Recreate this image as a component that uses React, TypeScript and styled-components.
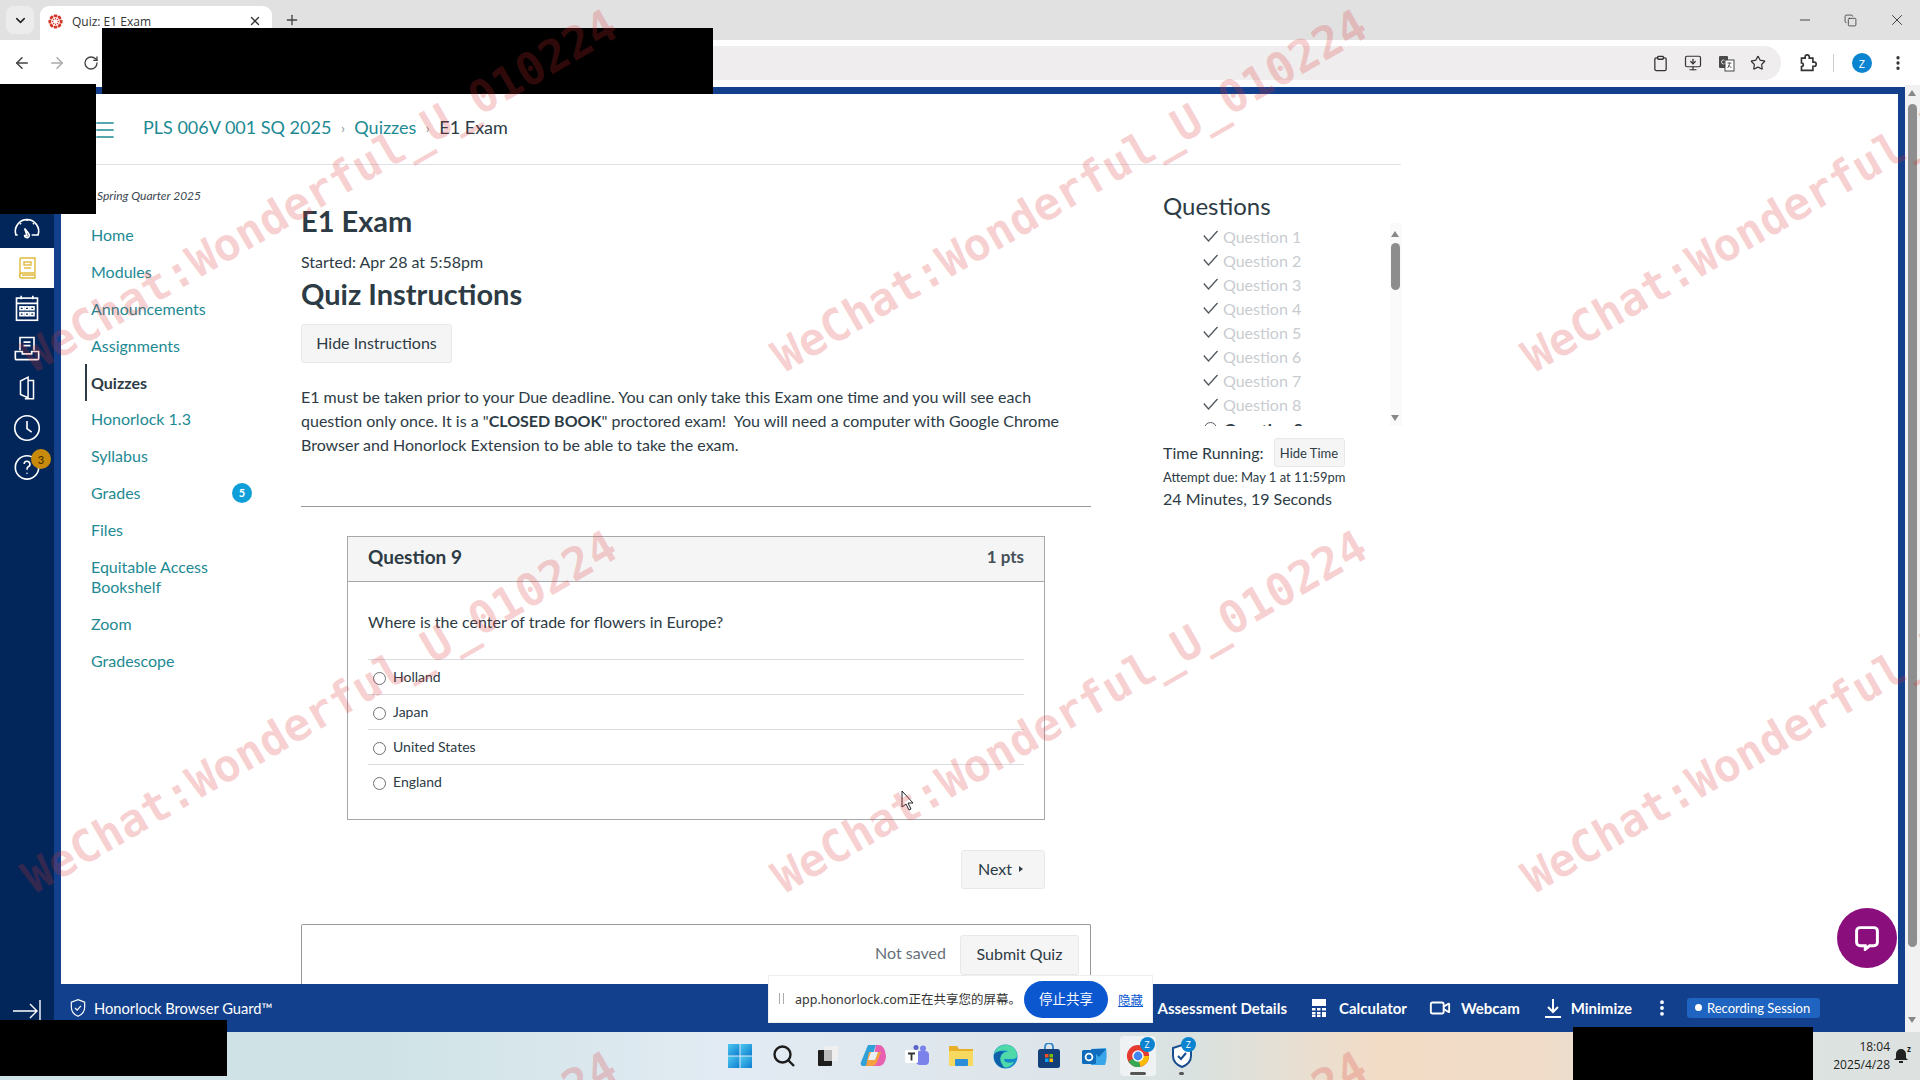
import React from "react";
import styled, { createGlobalStyle } from "styled-components";
import {
  ArrowLeft, ArrowRight, RotateCw, Clipboard, MonitorDown, Star, EllipsisVertical,
  Minus, X, Plus, ChevronDown, Copy, Video, Menu as MenuIcon,
} from "lucide-react";

const Global = createGlobalStyle`
  html, body { margin: 0; padding: 0; background: #fff; overflow: hidden; }
  * { box-sizing: border-box; }
`;

const Shell = styled.div`
  position: relative; width: 1920px; height: 1080px; overflow: hidden;
  display: flex; flex-direction: column;
  font-family: Lato, "Noto Sans", sans-serif; color: #2d3b45;
`;

/* ---- chrome ---- */
const TabStrip = styled.div`
  height: 40px; flex: none; background: #e1e1e1; display: flex; align-items: flex-end; padding-left: 6px;
`;
const TabMenu = styled.div`
  width: 28px; height: 28px; margin-bottom: 6px; border-radius: 8px; background: #ececec;
  display: flex; align-items: center; justify-content: center; color: #222;
`;
const Tab = styled.div`
  width: 232px; height: 34px; margin-left: 6px; background: #fff; border-radius: 9px 9px 0 0;
  display: flex; align-items: center; padding: 0 10px 4px 8px; gap: 9px;
  font: 12px "Open Sans", "Noto Sans", sans-serif; color: #333;
`;
const TabTitle = styled.span`flex: 1;`;
const NewTab = styled.div`margin: 0 0 6px 12px; height: 28px; display: flex; align-items: center; color: #444;`;
const WindowButtons = styled.div`
  margin-left: auto; display: flex; gap: 31px; height: 40px; align-items: center; padding-right: 14px; color: #222;
`;
const Toolbar = styled.div`
  height: 47px; flex: none; background: #fff; border-radius: 10px 10px 0 0; display: flex; align-items: center;
  padding: 0 0 1px 13px; color: #444;
`;
const NavButtons = styled.div`display: flex; gap: 17px; align-items: center;`;
const Omnibox = styled.div`
  width: 1675px; height: 34px; background: #efeded; border-radius: 0 17px 17px 0; flex: none;
  display: flex; align-items: center; justify-content: flex-end; gap: 15.5px; padding-right: 15px; color: #333;
  margin-left: 7px;
`;
const ToolbarEnd = styled.div`display: flex; align-items: center; margin-left: 18px; color: #333;`;
const ToolbarDivider = styled.div`width: 1px; height: 18px; background: #ccc; margin: 0 18px 0 16px;`;
const Avatar = styled.div`
  width: 20px; height: 20px; border-radius: 50%; background: #0a84d0; color: #fff; font: 11px "Open Sans", sans-serif;
  display: flex; align-items: center; justify-content: center; margin-right: 17px;
`;

/* ---- browser viewport ---- */
const Viewport = styled.div`flex: 1; display: flex; min-height: 0;`;
const GlobalNav = styled.nav`
  width: 54px; flex: none; background: #03265a; display: flex; flex-direction: column; align-items: center;
  padding-top: 121px; position: relative;
`;
const NavIcon = styled.div<{ $active?: boolean }>`
  width: 54px; height: 40px; display: flex; align-items: center; justify-content: center; position: relative; flex: none;
  background: ${p => (p.$active ? "#fff" : "transparent")};
  color: ${p => (p.$active ? "#e0b93c" : "#fff")};
`;
const HelpBadge = styled.span`
  position: absolute; left: 31px; top: 1px; width: 20px; height: 20px; border-radius: 50%; background: #c78a0b;
  font-size: 11px; color: #3a2a00; display: flex; align-items: center; justify-content: center;
`;
const Collapse = styled.div`margin-top: auto; height: 48px; padding-top: 13px; color: #fff; display: flex; align-items: flex-start;`;
const Stage = styled.div`
  flex: 1; min-width: 0; background: #13408c; display: flex; flex-direction: column; padding: 7px 7px 0 7px;
`;
const Page = styled.div`flex: 1; min-height: 0; background: #fff; overflow: hidden; position: relative;`;
const Header = styled.header`
  width: 1340px; height: 71px; border-bottom: 1px solid #dfe2e4; display: flex; align-items: center; padding: 0 0 4px 32px;
`;
const Burger = styled.div`color: #1e8a94; display: flex; margin: 6px 26px 0 0;`;
const Crumbs = styled.div`display: flex; align-items: center; font-size: 18px; color: #2d3b45;`;
const Crumb = styled.span`color: #1e8a94;`;
const CrumbSep = styled.span`margin: 0 9.5px; font-size: 14px; color: #8b969e;`;
const Columns = styled.div`display: flex;`;
const Menu = styled.aside`width: 240px; flex: none; padding: 23px 0 0 24px;`;
const Term = styled.div`font-size: 12px; font-style: italic; line-height: 16px; padding-left: 12px; margin-bottom: 13px; color: #3a4650;`;
const MenuItem = styled.div<{ $active?: boolean; $tall?: boolean }>`
  position: relative; padding: 8.4px 0 8.4px 4px; width: 150px; font-size: 16px; line-height: 20px;
  margin-top: ${p => (p.$tall ? 1 : 0)}px;
  color: ${p => (p.$active ? "#2d3b45" : "#1e8a94")};
  font-weight: ${p => (p.$active ? 700 : 400)};
  border-left: 2px solid ${p => (p.$active ? "#2d3b45" : "transparent")};
`;
const CountBadge = styled.span`
  position: absolute; left: 145px; top: 9px; width: 20px; height: 20px; border-radius: 50%; background: #0e9fd8; color: #fff;
  font-size: 11px; font-weight: 700; display: flex; align-items: center; justify-content: center;
`;
const Content = styled.main`width: 790px; flex: none;`;
const Title = styled.h1`margin: 39px 0 0; font-size: 29px; line-height: 34px; font-weight: 700;`;
const Started = styled.div`margin-top: 12px; font-size: 16px; line-height: 24px;`;
const Subtitle = styled.h2`margin: 3px 0 0; font-size: 29px; line-height: 34px; font-weight: 700;`;
const Btn = styled.div`
  display: inline-flex; align-items: center; justify-content: center; gap: 8px; background: #f5f5f5; border: 1px solid #e6e8ea;
  border-radius: 3px; font-size: 16px; color: #2d3b45; padding-bottom: 2px;
`;
const HideBtn = styled(Btn)`width: 151px; height: 39px; margin-top: 13px;`;
const Para = styled.p`margin: 22px 0 0; font-size: 16px; line-height: 24px; width: 780px;`;
const Rule = styled.hr`margin: 49px 0 0; border: 0; height: 1px; background: #999;`;
const Card = styled.section`margin: 29px 0 0 46px; width: 698px; height: 284px; border: 1px solid #a5a9ac;`;
const CardHead = styled.div`
  height: 45px; background: #f5f5f5; border-bottom: 1px solid #a5a9ac; display: flex; align-items: center; justify-content: space-between;
  padding: 0 20px 5px; font-size: 19px; font-weight: 700;
`;
const Pts = styled.span`font-size: 17px; font-weight: 700; color: #444f58;`;
const CardBody = styled.div`padding: 28px 20px 0;`;
const Prompt = styled.div`font-size: 16px; line-height: 24px; height: 49px;`;
const Answer = styled.label`
  display: flex; align-items: center; height: 35px; border-top: 1px solid #d8dcdf; font-size: 14px; padding: 0 0 2px 5px; gap: 7px; color: #2d3b45;
`;
const Radio = styled.span`width: 13px; height: 13px; border-radius: 50%; border: 1px solid #6a6f73; flex: none; margin-top: 4px; background: #fff;`;
const NextRow = styled.div`display: flex; justify-content: flex-end; margin: 30px 46px 0 0;`;
const NextBtn = styled(Btn)`width: 84px; height: 39px; gap: 7px; padding-right: 5px;`;
const Caret = styled.span`
  width: 0; height: 0; border-left: 4px solid #2d3b45; border-top: 3.5px solid transparent; border-bottom: 3.5px solid transparent; margin-top: 1px;
`;
const SubmitBox = styled.div`
  margin-top: 35px; height: 70px; border: 1px solid #999; border-bottom: 0; display: flex; justify-content: flex-end; align-items: flex-start;
  padding: 10px 11px 0 0; gap: 14px; border-radius: 2px 2px 0 0;
`;
const NotSaved = styled.span`font-size: 16px; line-height: 36px; color: #66717a;`;
const SubmitBtn = styled(Btn)`width: 119px; height: 40px; padding-bottom: 3px;`;
const Side = styled.aside`margin-left: 72px; width: 240px; flex: none;`;
const SideTitle = styled.h3`margin: 26px 0 0; font-size: 24px; line-height: 30px; font-weight: 400;`;
const QList = styled.div`position: relative; height: 203px; margin-top: 2px; overflow: hidden; padding: 1px 0 0 40px;`;
const QItem = styled.div<{ $current?: boolean }>`
  height: 24px; display: flex; align-items: center; gap: 5px; font-size: 16px;
  color: ${p => (p.$current ? "#2d3b45" : "#c8ccd0")}; font-weight: ${p => (p.$current ? 700 : 400)};
`;
const QMark = styled.svg`width: 15px; height: 12px; flex: none; color: #4f565c;`;
const QCircle = styled.span`width: 13px; height: 13px; border: 1px solid #5a6168; border-radius: 50%; margin: 0 2px 0 1px;`;
const ListBar = styled.div`
  position: absolute; left: 227px; top: 0; bottom: 0; width: 12px; background: #fafafa;
`;
const ListThumb = styled.div`position: absolute; left: 1px; top: 20px; width: 9px; height: 47px; border-radius: 5px; background: #8d8d8d;`;
const UpArrow = styled.span`
  position: absolute; left: 1px; top: 8px; width: 0; height: 0; border: 4.5px solid transparent; border-top: 0; border-bottom: 6px solid #888;
`;
const DownArrow = styled.span`
  position: absolute; left: 1px; bottom: 5px; width: 0; height: 0; border: 4.5px solid transparent; border-bottom: 0; border-top: 6px solid #888;
`;
const TimeRow = styled.div`display: flex; align-items: center; font-size: 16px; gap: 10px; margin-top: 12px;`;
const TimeBtn = styled(Btn)`width: 71px; height: 29px; font-size: 13px; padding-bottom: 0;`;
const Due = styled.div`font-size: 13px; line-height: 18px; margin-top: 1px;`;
const Remaining = styled.div`font-size: 16px; line-height: 24px; margin-top: 1px;`;

const BottomBar = styled.div`
  height: 48px; flex: none; background: #13408c; color: #fff; display: flex; align-items: center; font-size: 14.7px; padding-bottom: 1px;
`;
const Guard = styled.div`display: flex; align-items: center; gap: 6px; margin-left: 7px;`;
const Tools = styled.div`display: flex; align-items: center; margin-left: auto; padding-right: 78px; font-weight: 700; font-size: 15px;`;
const Tool = styled.div<{ $gap?: number; $inner?: number }>`display: flex; align-items: center; gap: ${p => p.$inner ?? 10}px; margin-left: ${p => p.$gap ?? 0}px;`;
const Pill = styled.div`
  margin-left: 15px; width: 133px; height: 20px; border-radius: 3px; background: #1f64c0; font-size: 13px; font-weight: 400; display: flex; align-items: center; gap: 5px; padding-left: 8px;
`;
const Dot = styled.span`width: 7px; height: 7px; border-radius: 50%; background: #fff;`;

const PageScroll = styled.div`width: 15px; flex: none; background: #f1f1f1; position: relative; margin-top: -2px;`;
const ScrollThumb = styled.div`position: absolute; left: 3px; top: 19px; width: 9px; height: 843px; background: #8e8e8e; border-radius: 5px;`;
const ScrollUp = styled.span`
  position: absolute; left: 3px; top: 5px; width: 0; height: 0; border: 4.5px solid transparent; border-top: 0; border-bottom: 6px solid #888;
`;
const ScrollDown = styled.span`
  position: absolute; left: 3px; top: 932px; width: 0; height: 0; border: 4.5px solid transparent; border-bottom: 0; border-top: 6px solid #888;
`;

/* ---- taskbar ---- */
const Taskbar = styled.div`
  height: 48px; flex: none; display: flex; align-items: center; position: relative; padding-left: 725px;
  background: linear-gradient(90deg, #cfe4e6 0%, #cfe3e6 20%, #e2ebf3 38%, #dde5ea 55%, #d9e2e0 62%, #f3dcc6 72%, #f0dcc8 80%, #dce3e1 90%, #dde2e0 100%);
  font: 12px "Open Sans", "Noto Sans", sans-serif; color: #222;
`;
const TaskIcon = styled.div<{ $on?: boolean }>`
  width: ${p => (p.$on ? 36 : 30)}px; height: 40px; margin: 0 ${p => (p.$on ? 11.2 : 14.2)}px 0 ${p => (p.$on ? -3 : 0)}px;
  display: flex; align-items: center; justify-content: center; flex: none; position: relative;
  border-radius: 4px; background: ${p => (p.$on ? "rgba(255,255,255,.55)" : "transparent")};
`;
const TaskBadge = styled.span`
  position: absolute; right: 1px; top: 1px; width: 15px; height: 15px; border-radius: 50%; background: #0a84d0; color: #fff; font-size: 9px;
  display: flex; align-items: center; justify-content: center;
`;
const RunBar = styled.span<{ $w: number }>`
  position: absolute; bottom: 1px; left: 50%; width: ${p => p.$w}px; height: 3px; margin-left: ${p => -p.$w / 2}px; border-radius: 2px; background: #555;
`;
const Clock = styled.div`
  position: absolute; right: 30px; top: 6px; text-align: right; line-height: 18px; font-size: 12px;
`;
const Bell = styled.div`position: absolute; right: 12px; top: 14px; display: flex;`;
const BellZ = styled.span`position: absolute; right: -3px; top: -3px; font-size: 8px; font-weight: 700;`;

/* ---- overlays ---- */
const Redact = styled.div<{ $x: number; $y: number; $w: number; $h: number }>`
  position: absolute; background: #000; left: ${p => p.$x}px; top: ${p => p.$y}px; width: ${p => p.$w}px; height: ${p => p.$h}px;
`;
const Mark = styled.div<{ $x: number; $y: number }>`
  position: absolute; left: ${p => p.$x}px; top: ${p => p.$y - 54}px; height: 54px; white-space: nowrap;
  font: 700 45px/54px "DejaVu Sans Mono", monospace; color: rgba(222, 48, 48, 0.22);
  transform-origin: 0 100%; transform: rotate(-30deg); pointer-events: none;
`;
const Chat = styled.div`
  position: absolute; left: 1837px; top: 908px; width: 60px; height: 60px; border-radius: 50%; background: #8a0f7d;
  display: flex; align-items: center; justify-content: center;
`;
const Cursor = styled.svg`position: absolute; left: 901px; top: 790px;`;
const Share = styled.div`
  position: absolute; left: 768px; top: 975px; width: 385px; height: 48px; background: #fff; border: 1px solid #eee; display: flex; align-items: center;
  font: 12.5px "Noto Sans", "Noto Sans CJK SC", sans-serif; color: #333; padding-bottom: 2px;
`;
const Grip = styled.span`width: 5px; height: 11px; margin: 0 11px 0 10px; border-left: 1px solid #aaa; border-right: 1px solid #aaa;`;
const StopBtn = styled.div`
  position: absolute; left: 255px; top: 5px; width: 84px; height: 37px; border-radius: 19px; background: #0b57d0; color: #fff;
  font-size: 13.5px; display: flex; align-items: center; justify-content: center; padding-bottom: 3px;
`;
const HideLink = styled.span`position: absolute; left: 349px; top: 14px; color: #0b57d0; text-decoration: underline; font-size: 12.5px;`;

const items = ["Home", "Modules", "Announcements", "Assignments", "Quizzes", "Honorlock 1.3", "Syllabus", "Grades", "Files", "Equitable Access Bookshelf", "Zoom", "Gradescope"];
const marks: [number, number][] = [[40, 384], [790, 384], [1540, 384], [40, 905], [790, 905], [1540, 905], [40, 1426], [790, 1426], [1540, 1426]];

const S = (p: { s?: number; children: React.ReactNode; vb?: string }) => (
  <svg width={p.s ?? 24} height={p.s ?? 24} viewBox={p.vb ?? "0 0 24 24"} fill="none" stroke="currentColor" strokeWidth="1.4">{p.children}</svg>
);

const Favicon = () => (
  <svg width="15" height="15" viewBox="0 0 16 16">
    <g fill="#d5372a">
      {[0, 45, 90, 135, 180, 225, 270, 315].map(a => (
        <g key={a} transform={`rotate(${a} 8 8)`}><rect x="6" y="0.5" width="4" height="3" rx="1" /><circle cx="8" cy="5" r=".8" /></g>
      ))}
    </g>
  </svg>
);

export default function App() {
  return (
    <Shell>
      <Global />
      <TabStrip>
        <TabMenu><ChevronDown size={15} strokeWidth={2.4} /></TabMenu>
        <Tab><Favicon /><TabTitle>Quiz: E1 Exam</TabTitle><X size={14} strokeWidth={2.4} /></Tab>
        <NewTab><Plus size={16} strokeWidth={2} /></NewTab>
        <WindowButtons>
          <Minus size={16} strokeWidth={1.2} />
          <Copy size={13} strokeWidth={1.3} />
          <X size={18} strokeWidth={1.1} />
        </WindowButtons>
      </TabStrip>
      <Toolbar>
        <NavButtons>
          <ArrowLeft size={18} strokeWidth={2} />
          <ArrowRight size={18} strokeWidth={2} color="#aaa" />
          <RotateCw size={16} strokeWidth={2} />
        </NavButtons>
        <Omnibox>
          <Clipboard size={17} strokeWidth={1.8} />
          <MonitorDown size={18} strokeWidth={1.6} />
          <svg width="17" height="17" viewBox="0 0 17 17"><rect x="1" y="1" width="9" height="12" rx="1" fill="#4a4a4a" /><circle cx="5.500" cy="7" r="2" fill="none" stroke="#ddd" strokeWidth="1" /><rect x="7" y="5" width="9" height="11" fill="#fff" stroke="#444" strokeWidth="1" /><path d="M9.500 8h4M11.500 8c0 2-1 4-2 5M10.500 10l3 3" stroke="#444" strokeWidth=".9" fill="none" /></svg>
          <Star size={16} strokeWidth={1.8} />
        </Omnibox>
        <ToolbarEnd>
          <svg width="18" height="20" viewBox="0 0 22 24" fill="none" stroke="#333" strokeWidth="2"><path d="M3 6h4.500V4.500a2.500 2.500 0 0 1 5 0V6H17v5h1.500a2.500 2.500 0 0 1 0 5H17v5H3v-4.500a2 2 0 0 0 0-4.500z" /></svg>
          <ToolbarDivider />
          <Avatar>Z</Avatar>
          <EllipsisVertical size={18} strokeWidth={2.4} />
        </ToolbarEnd>
      </Toolbar>
      <Viewport>
        <GlobalNav>
          <NavIcon>
            <S s={28}><g transform="translate(0 -2)"><path d="M4 20H2.500a10 10 0 1 1 19 0H16" /><path d="M12 20.500l-2-6 3.500 4.500a2 2 0 1 1-3.500 1.500z" /><path d="M12 7v1M6 10l1 .6M18 10l-1 .6" /></g></S>
          </NavIcon>
          <NavIcon $active>
            <S s={24}><path d="M5 2h15v15H7a2.500 2.500 0 0 0 0 5h13v-3H7M5 2v17" /><rect x="9" y="6" width="7" height="3" /><path d="M9 12h7" /></S>
          </NavIcon>
          <NavIcon>
            <S s={28}><rect x="3" y="3.500" width="18" height="19" /><path d="M3 8h18M7 1.500v3M17 1.500v3" /><path d="M6 11h3v2.500H6zM10.500 11h3v2.500h-3zM15 11h3v2.500h-3zM6 16h3v2.500H6zM10.500 16h3v2.500h-3zM15 16h3v2.500h-3z" /></S>
          </NavIcon>
          <NavIcon>
            <S s={28}><path d="M6 14V3h12v11M9 7h6M9 10h6" /><path d="M2 15h6v2h8v-2h6v6a1 1 0 0 1-1 1H3a1 1 0 0 1-1-1z" /></S>
          </NavIcon>
          <NavIcon>
            <S s={26}><path d="M6 5.500L13 2v19l-7-3z" /><path d="M13 5h5v17h-8" /></S>
          </NavIcon>
          <NavIcon>
            <S s={28}><circle cx="12" cy="12" r="10.500" /><path d="M12 6v6.500l4 3" /></S>
          </NavIcon>
          <NavIcon>
            <S s={28}><g transform="translate(0 -1.500)"><circle cx="12" cy="13" r="10" /><path d="M9.500 10a2.500 2.500 0 1 1 3.500 2.500c-1 .5-1 1-1 2.500M12 17.500v1" /></g></S>
            <HelpBadge>3</HelpBadge>
          </NavIcon>
          <Collapse>
            <S s={30} vb="0 0 30 30"><path d="M1 14h24M18 7l7 7-7 7M28 3v22" /></S>
          </Collapse>
        </GlobalNav>
        <Stage>
          <Page>
            <Header>
              <Burger><MenuIcon size={24} strokeWidth={1.7} /></Burger>
              <Crumbs>
                <Crumb>PLS 006V 001 SQ 2025</Crumb><CrumbSep>›</CrumbSep>
                <Crumb>Quizzes</Crumb><CrumbSep>›</CrumbSep>
                <span>E1 Exam</span>
              </Crumbs>
            </Header>
            <Columns>
              <Menu>
                <Term>Spring Quarter 2025</Term>
                {items.map(i => (
                  <MenuItem key={i} $active={i === "Quizzes"} $tall={i.startsWith("Equitable")}>
                    {i}
                    {i === "Grades" && <CountBadge>5</CountBadge>}
                  </MenuItem>
                ))}
              </Menu>
              <Content>
                <Title>E1 Exam</Title>
                <Started>Started: Apr 28 at 5:58pm</Started>
                <Subtitle>Quiz Instructions</Subtitle>
                <HideBtn>Hide Instructions</HideBtn>
                <Para>
                  E1 must be taken prior to your Due deadline. You can only take this Exam one time and you will see each
                  question only once. It is a "<b>CLOSED BOOK</b>" proctored exam!&nbsp; You will need a computer with Google Chrome
                  Browser and Honorlock Extension to be able to take the exam.
                </Para>
                <Rule />
                <Card>
                  <CardHead><span>Question 9</span><Pts>1 pts</Pts></CardHead>
                  <CardBody>
                    <Prompt>Where is the center of trade for flowers in Europe?</Prompt>
                    {["Holland", "Japan", "United States", "England"].map(a => (
                      <Answer key={a}><Radio />{a}</Answer>
                    ))}
                  </CardBody>
                </Card>
                <NextRow><NextBtn>Next <Caret /></NextBtn></NextRow>
                <SubmitBox>
                  <NotSaved>Not saved</NotSaved>
                  <SubmitBtn>Submit Quiz</SubmitBtn>
                </SubmitBox>
              </Content>
              <Side>
                <SideTitle>Questions</SideTitle>
                <QList>
                  {[1, 2, 3, 4, 5, 6, 7, 8].map(n => (
                    <QItem key={n}>
                      <QMark viewBox="0 0 15 12" fill="none" stroke="currentColor" strokeWidth="1.3"><path d="M.8 5.500l4.700 5.500L14.500 1" /></QMark>
                      Question {n}
                    </QItem>
                  ))}
                  <QItem $current><QCircle />Question 9</QItem>
                  <ListBar><UpArrow /><ListThumb /><DownArrow /></ListBar>
                </QList>
                <TimeRow>Time Running: <TimeBtn>Hide Time</TimeBtn></TimeRow>
                <Due>Attempt due: May 1 at 11:59pm</Due>
                <Remaining>24 Minutes, 19 Seconds</Remaining>
              </Side>
            </Columns>
          </Page>
          <BottomBar>
            <Guard>
              <S s={20}><path d="M12 2l8 3v6c0 5.500-3.500 9-8 11-4.500-2-8-5.500-8-11V5z" /><path d="M8.500 12l2.500 2.500 4.500-5" /></S>
              Honorlock Browser Guard™
            </Guard>
            <Tools>
              <Tool>Assessment Details</Tool>
              <Tool $gap={25} $inner={13}>
                <svg width="14" height="18" viewBox="0 0 14 18" fill="#fff"><rect width="14" height="7" /><rect y="9" width="3.500" height="2.500" /><rect x="5" y="9" width="3.500" height="2.500" /><rect x="10" y="9" width="4" height="2.500" /><rect y="13" width="3.500" height="2.500" /><rect x="5" y="13" width="3.500" height="2.500" /><rect x="10" y="13" width="4" height="5" /><rect y="16" width="3.500" height="2" /><rect x="5" y="16" width="3.500" height="2" /></svg>
                Calculator
              </Tool>
              <Tool $gap={22}><Video size={22} strokeWidth={2} />Webcam</Tool>
              <Tool $gap={25}>
                <svg width="16" height="20" viewBox="0 0 16 20" fill="none" stroke="#fff" strokeWidth="2"><path d="M8 1v13M3 9l5 5 5-5M0 19h16" /></svg>
                Minimize
              </Tool>
              <Tool $gap={20}><EllipsisVertical size={20} strokeWidth={2.6} /></Tool>
              <Pill><Dot />Recording Session</Pill>
            </Tools>
          </BottomBar>
        </Stage>
        <PageScroll><ScrollUp /><ScrollThumb /><ScrollDown /></PageScroll>
      </Viewport>
      <Taskbar>
        <TaskIcon>
          <svg width="24" height="24" viewBox="0 0 24 24"><defs><linearGradient id="w" x1="0" y1="0" x2="1" y2="1"><stop offset="0" stopColor="#4cc8f0" /><stop offset="1" stopColor="#0f7ed0" /></linearGradient></defs><g fill="url(#w)"><rect x="0" y="0" width="11.500" height="11.500" /><rect x="12.500" y="0" width="11.500" height="11.500" /><rect x="0" y="12.500" width="11.500" height="11.500" /><rect x="12.500" y="12.500" width="11.500" height="11.500" /></g></svg>
        </TaskIcon>
        <TaskIcon>
          <svg width="24" height="24" viewBox="0 0 24 24" fill="none" stroke="#1c1c1c" strokeWidth="2.4"><circle cx="10.500" cy="10.500" r="8" /><path d="M16 16l6 6" /></svg>
        </TaskIcon>
        <TaskIcon>
          <svg width="24" height="24" viewBox="0 0 24 24"><rect x="8" y="2" width="14" height="15" rx="1" fill="#efefef" /><rect x="2" y="6" width="14" height="16" rx="1" fill="#1d1d1d" /><rect x="8" y="6" width="8" height="11" fill="#bbb" /></svg>
        </TaskIcon>
        <TaskIcon>
          <svg width="26" height="24" viewBox="0 0 26 24"><path d="M8 1h8l-5 15c-1 3-3 6-6 6H3c-2 0-3-2-2-4z" fill="#30a0d8" /><path d="M16 1h3c3 0 5 3 6 6l1 5c0 5-3 10-7 10h-7z" fill="#e860b0" /><path d="M9 8h12l-4 10c-1 3-3 4-6 4H6z" fill="#f5a040" /><path d="M11 8h7l-3 8H8z" fill="#e8eef5" /></svg>
        </TaskIcon>
        <TaskIcon>
          <svg width="26" height="24" viewBox="0 0 26 24"><rect x="12" y="7" width="13" height="14" rx="4" fill="#7b83eb" /><circle cx="19" cy="4.500" r="3" fill="#7b83eb" /><circle cx="12" cy="3.500" r="2.500" fill="#5b62c8" /><rect x="1" y="6" width="13" height="13" rx="1.500" fill="#fff" /><path d="M4 9.500h7M7.500 9.500v7" stroke="#333" strokeWidth="1.800" /></svg>
        </TaskIcon>
        <TaskIcon>
          <svg width="26" height="24" viewBox="0 0 26 24"><path d="M1 2h8l2 3h14v17H1z" fill="#e8b028" /><rect x="1" y="7" width="24" height="15" fill="#f8d960" /><rect x="7" y="15" width="13" height="7" rx="1" fill="#2a8fd8" /></svg>
        </TaskIcon>
        <TaskIcon>
          <svg width="25" height="25" viewBox="0 0 25 25"><circle cx="12.500" cy="12.500" r="12" fill="#1488cc" /><path d="M1 10C3 3 10 0 15 1c6 1 9 6 9 11 0 2-2 3-5 3H11c0 3 4 5 10 3-4 6-9 6-12 5 4 0-4-5-1-11 1-3 5-5 8-4-5-3-12-1-15 2z" fill="#4fd8a8" /><path d="M1 12c0-3 6-6 10-4-4 2-5 7-3 11 1 2 2 4 5 5-7 0-12-5-12-12z" fill="#0f5ea8" /></svg>
        </TaskIcon>
        <TaskIcon>
          <svg width="24" height="26" viewBox="0 0 24 26"><rect x="1" y="6" width="22" height="19" rx="2.500" fill="#123f7a" /><path d="M8 6V4a4 4 0 0 1 8 0v2" fill="none" stroke="#2f84c8" strokeWidth="1.800" /><rect x="8" y="11" width="3.500" height="3.500" fill="#f25022" /><rect x="12.500" y="11" width="3.500" height="3.500" fill="#7fba00" /><rect x="8" y="15.500" width="3.500" height="3.500" fill="#00a4ef" /><rect x="12.500" y="15.500" width="3.500" height="3.500" fill="#ffb900" /></svg>
        </TaskIcon>
        <TaskIcon>
          <svg width="26" height="24" viewBox="0 0 26 24"><path d="M10 5l15-1c1 6 1 12-1 17H10z" fill="#38a6e8" /><path d="M10 5h15l-7 8z" fill="#0f6cbd" /><rect x="1" y="6" width="14" height="14" rx="1.500" fill="#0f6cbd" /><circle cx="8" cy="13" r="3.400" fill="none" stroke="#fff" strokeWidth="1.800" /></svg>
        </TaskIcon>
        <TaskIcon $on>
          <svg width="24" height="24" viewBox="0 0 26 26"><circle cx="13" cy="13" r="12" fill="#e53b30" /><path d="M13 13L2.600 19a12 12 0 0 0 13 5.700z" fill="#34a853" /><path d="M13 13l2.600 11.700A12 12 0 0 0 25 13z" fill="#fbbc05" /><circle cx="13" cy="13" r="5.500" fill="#4285f4" stroke="#fff" strokeWidth="1.500" /></svg>
          <TaskBadge>Z</TaskBadge>
          <RunBar $w={16} />
        </TaskIcon>
        <TaskIcon>
          <svg width="24" height="26" viewBox="0 0 24 26"><path d="M12 2l9 3v8c0 6-4 9-9 11-5-2-9-5-9-11V5z" fill="#fff" stroke="#1a4f8f" strokeWidth="2" /><path d="M8 13l3 3 5-6" fill="none" stroke="#1a4f8f" strokeWidth="2" /></svg>
          <TaskBadge>Z</TaskBadge>
          <RunBar $w={5} />
        </TaskIcon>
        <Clock>18:04<br />2025/4/28</Clock>
        <Bell>
          <svg width="14" height="18" viewBox="0 0 14 18" fill="#222"><path d="M7 3a5 5 0 0 1 5 5v4l2 2H0l2-2V8a5 5 0 0 1 5-5z" /><rect x="5" y="15" width="4" height="2" /></svg>
          <BellZ>z</BellZ>
        </Bell>
      </Taskbar>

      <Redact $x={102} $y={28} $w={611} $h={66} />
      <Redact $x={0} $y={84} $w={96} $h={130} />
      <Redact $x={0} $y={1020} $w={227} $h={56} />
      <Redact $x={1573} $y={1027} $w={240} $h={53} />

      <Share>
        <Grip />app.honorlock.com正在共享您的屏幕。
        <StopBtn>停止共享</StopBtn>
        <HideLink>隐藏</HideLink>
      </Share>
      <Chat>
        <svg width="26" height="26" viewBox="0 0 30 30" fill="none" stroke="#fff" strokeWidth="3.400"><path d="M7 3h16a4 4 0 0 1 4 4v13a4 4 0 0 1-4 4h-5l-5 4v-4H7a4 4 0 0 1-4-4V7a4 4 0 0 1 4-4z" /></svg>
      </Chat>
      <Cursor width="14" height="22" viewBox="0 0 14 22"><path d="M1 1v16l4-3 3 6 2-1-3-6h5z" fill="#fff" stroke="#222" strokeWidth="1" /></Cursor>
      {marks.map(([x, y]) => <Mark key={x + "-" + y} $x={x} $y={y}>WeChat:Wonderful_U_010224</Mark>)}
    </Shell>
  );
}
